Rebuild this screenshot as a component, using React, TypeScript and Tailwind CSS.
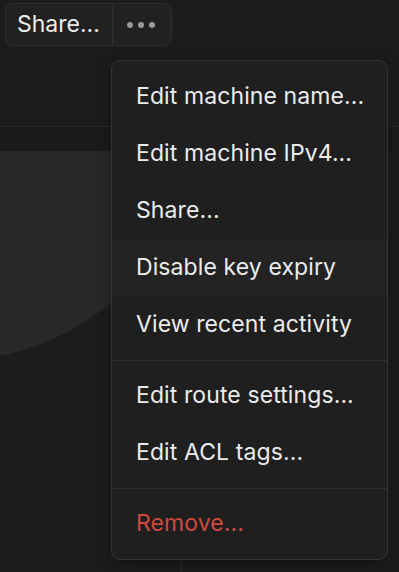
import React from "react";

const items1 = [
  "Edit machine name...",
  "Edit machine IPv4...",
  "Share...",
  "Disable key expiry",
  "View recent activity",
];
const items2 = ["Edit route settings...", "Edit ACL tags..."];

function Item({ label, active, danger }: { label: string; active?: boolean; danger?: boolean }) {
  return (
    <div
      className={
        "h-[57px] flex items-center pl-[24px] text-[23px] leading-none tracking-[0.1px] " +
        (active ? "bg-[#232323] " : "") +
        (danger ? "text-[#cd4a3e]" : "text-[#ececec]")
      }
    >
      {label}
    </div>
  );
}

export default function App() {
  return (
    <div
      className="relative w-[399px] h-[572px] overflow-hidden bg-[#1c1c1c]"
      style={{ fontFamily: "Inter, 'Noto Sans', sans-serif" }}
    >
      {/* page background */}
      <div className="flex flex-col h-full">
        <div className="h-[127px] border-b border-[#2a2a2a] pl-[5px] pt-[3px]">
          <div className="flex h-[43px] w-[167px] rounded-[8px] border border-[#2f2f2f] bg-[#212121]">
            <div className="w-[107px] flex items-center pl-[11px] text-[23px] text-[#ececec] border-r border-[#2f2f2f]">
              Share...
            </div>
            <div className="flex-1 flex items-center justify-center gap-[5px] pr-[2px]">
              <span className="w-[6px] h-[6px] rounded-full bg-[#9a9a9a]" />
              <span className="w-[6px] h-[6px] rounded-full bg-[#9a9a9a]" />
              <span className="w-[6px] h-[6px] rounded-full bg-[#9a9a9a]" />
            </div>
          </div>
        </div>
        <div className="h-[24px] bg-[#1b1b1b]" />
        <div className="flex-1 flex">
          <div className="w-[182px] border-r border-[#2a2a2a]">
            <svg width="182" height="420" viewBox="0 0 182 420" className="block">
              <defs>
                <linearGradient id="g" x1="0" y1="0" x2="1" y2="0">
                  <stop offset="0" stopColor="#262626" />
                  <stop offset="1" stopColor="#292929" />
                </linearGradient>
              </defs>
              <circle cx="-60" cy="-62" r="274" fill="url(#g)" />
            </svg>
          </div>
          <div className="flex-1" />
        </div>
      </div>

      {/* dropdown menu */}
      <div className="absolute left-[111px] top-[60px] w-[277px] rounded-[9px] border border-[#333333] bg-[#1f1f1f] py-[7px] shadow-[0_4px_16px_rgba(0,0,0,0.35)]">
        {items1.map((l, i) => (
          <Item key={l} label={l} active={i === 3} />
        ))}
        <div className="h-px bg-[#2e2e2e] mt-[7px] mb-[6px]" />
        {items2.map((l) => (
          <Item key={l} label={l} />
        ))}
        <div className="h-px bg-[#2e2e2e] mt-[7px] mb-[6px]" />
        <Item label="Remove..." danger />
      </div>
    </div>
  );
}
